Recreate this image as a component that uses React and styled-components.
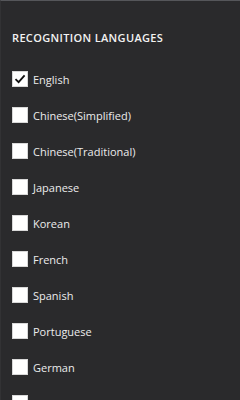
import React, { useState } from 'react';
import styled, { createGlobalStyle } from 'styled-components';

const GlobalStyle = createGlobalStyle`
  html, body {
    margin: 0;
    padding: 0;
    background: #2a2a2c;
  }
  body {
    font-family: "Open Sans", "Noto Sans", sans-serif;
  }
`;

const Page = styled.div`
  width: 240px;
  height: 400px;
  box-sizing: border-box;
  overflow: hidden;
  background: #2a2a2c;
  border-top: 1px solid #55565a;
  border-left: 1px solid #323234;
`;

const Title = styled.h2`
  margin: 0;
  padding: 29px 0 0 11px;
  height: 16px;
  line-height: 16px;
  font-size: 11px;
  font-weight: 600;
  color: #f2f2f2;
  letter-spacing: 0.35px;
`;

const List = styled.div`
  display: flex;
  flex-direction: column;
  padding-top: 15px;
`;

const Row = styled.label`
  display: flex;
  align-items: center;
  height: 36px;
  padding-left: 11px;
  gap: 5px;
  cursor: pointer;
`;

const Box = styled.span`
  width: 16px;
  height: 16px;
  box-sizing: border-box;
  background: #ffffff;
  border: 1px solid #d8d8d8;
  display: flex;
  align-items: center;
  justify-content: center;
`;

const Label = styled.span`
  font-size: 11px;
  color: #ececec;
`;

const languages = [
  'English',
  'Chinese(Simplified)',
  'Chinese(Traditional)',
  'Japanese',
  'Korean',
  'French',
  'Spanish',
  'Portuguese',
  'German',
  'Italian'
];

export default function App() {
  const [checked, setChecked] = useState({ English: true });

  const toggle = name => {
    setChecked(prev => ({ ...prev, [name]: !prev[name] }));
  };

  return (
    <Page>
      <GlobalStyle />
      <Title>RECOGNITION LANGUAGES</Title>
      <List>
        {languages.map(name => (
          <Row key={name} onClick={() => toggle(name)}>
            <Box>
              {checked[name] && (
                <svg width="12" height="12" viewBox="0 0 12 12">
                  <path d="M1.5 6.2 L4.6 9.2 L10.6 2.4" fill="none" stroke="#111" strokeWidth="1.8" />
                </svg>
              )}
            </Box>
            <Label>{name}</Label>
          </Row>
        ))}
      </List>
    </Page>
  );
}
